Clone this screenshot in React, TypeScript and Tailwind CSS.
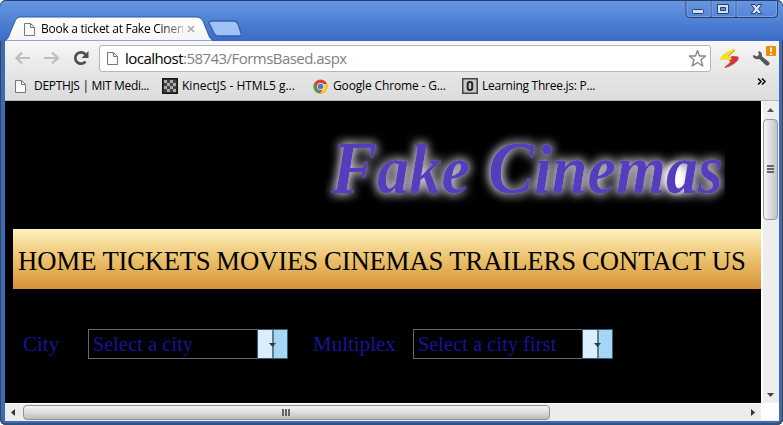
import React from "react";

const ui = "font-['Open_Sans','Noto_Sans',sans-serif]";
const serif = "font-['Liberation_Serif',serif]";

function PageIcon() {
  return (
    <svg width="13" height="15" viewBox="0 0 13 15" className="shrink-0">
      <path d="M1.500 1.500h6l4 4v8h-10z" fill="#fafafa" stroke="#777" />
      <path d="M7.500 1.500v4h4" fill="none" stroke="#777" />
    </svg>
  );
}

function TitleBar() {
  return (
    <header className="relative flex h-[41px] shrink-0 rounded-t-md bg-gradient-to-b from-[#6797e1] to-[#3b6bc6] shadow-[inset_0_1px_0_#26406d]">
      <svg width="250" height="41" viewBox="0 0 250 41" className="absolute left-0 top-0">
        <defs>
          <linearGradient id="tab" x1="0" y1="0" x2="0" y2="1">
            <stop offset="0" stopColor="#fff" />
            <stop offset="1" stopColor="#f5f5f5" />
          </linearGradient>
        </defs>
        <path d="M4 41C8 40 9 36 10 33L15 21Q16.500 17 20 17H197Q201 17 203 21L209 36Q211 41 216 41Z" fill="url(#tab)" stroke="#3058a5" strokeWidth="1" />
        <path d="M209 23Q209 21 212 21H234Q237 21 238 24L241 33Q242 36 239 36H219Q215 36 214 33Z" fill="#9dc2f3" stroke="#345fae" strokeWidth="1.300" />
      </svg>
      <div className="relative ml-[23px] mt-[17px] flex h-6 w-[174px] items-center">
        <PageIcon />
        <span className={`${ui} ml-[5px] w-[142px] whitespace-nowrap bg-gradient-to-r from-black from-80% to-[#bbb] bg-clip-text text-[12px] tracking-[-0.26px] text-transparent`}>Book a ticket at Fake Cinen</span>
        <svg width="9" height="9" viewBox="0 0 9 9" className="ml-[4px] shrink-0"><path d="M1 1l6 6M7 1L1 7" stroke="#aaa" strokeWidth="1.700" /></svg>
      </div>
      <svg width="94" height="19" viewBox="0 0 94 19" className="ml-auto mr-[4px] shrink-0">
        <path d="M1 1V14Q1 17.500 5 17.500H89Q92.500 17.500 92.500 14V1M26 1V17M51 1V17" fill="none" stroke="#263f6d" />
        <path d="M2 1V14Q2 16.500 5 16.500H25V1M27 1V16.500H50V1M52 1V16.500H88Q91.500 16.500 91.500 13V1" fill="none" stroke="#86afed" strokeWidth=".7" />
        <rect x="7.500" y="9.500" width="11" height="4" rx="1" fill="#d3e0f7" stroke="#29426e" />
        <path d="M32.500 4.500H43.500V13.500H32.500ZM35.500 7.500H40.500V10.500H35.500Z" fillRule="evenodd" fill="#d3e0f7" stroke="#29426e" />
        <path d="M66 4.500H70L71.500 6.500L73 4.500H77L73.500 9L77 13.500H73L71.500 11.500L70 13.500H66L69.500 9Z" fill="#d3e0f7" stroke="#29426e" />
      </svg>
    </header>
  );
}

function Toolbar() {
  return (
    <div className="flex h-[34px] shrink-0 items-center bg-gradient-to-b from-[#f7f7f7] to-[#e5e5e5]">
      <svg width="80" height="24" viewBox="0 0 80 24" className="ml-[9px] shrink-0">
        <path d="M16 12H3M8 6.500L2.500 12L8 17.500" fill="none" stroke="#bdbdbd" strokeWidth="2.200" />
        <path d="M30 12H43M38 6.500L44 12L38 17.500" fill="none" stroke="#bdbdbd" strokeWidth="2.200" />
        <path d="M71.500 8.500A5.700 5.700 0 1 0 71.500 15.500" fill="none" stroke="#4e4e4e" strokeWidth="2.700" />
        <path d="M74.500 5V12H67.500Z" fill="#4e4e4e" />
      </svg>
      <div className="ml-[5px] flex h-[27px] w-[612px] shrink-0 items-center rounded-[3px] border border-[#b6b6b6] bg-white pl-[6px] pr-[3px]">
        <PageIcon />
        <span className={`${ui} ml-[6px] whitespace-nowrap text-[15px] tracking-[-0.54px] text-[#808080]`}><span className="text-black">localhost</span>:58743/FormsBased.aspx</span>
        <svg width="19" height="19" viewBox="0 0 19 19" className="ml-auto"><path d="M9.500 1.500L11.500 7H17.600L13 10.800L14.800 17L9.500 13.500L4.200 17L6 10.800L1.400 7H7.500Z" fill="#fff" stroke="#888" strokeWidth="1.400" strokeLinejoin="round" /></svg>
      </div>
      <svg width="64" height="30" viewBox="0 0 64 30" className="ml-[5px] shrink-0">
        <path d="M8 24.500L14.500 19L12 16.500L16 13L22 13.500Q23.500 14.500 21.500 17Q18 21 8 24.500Z" fill="#df3036" />
        <path d="M9 24.500Q18 22 22 16.500" fill="none" stroke="#83272c" strokeWidth=".9" />
        <path d="M4 15.500Q7 9.500 17.500 6Q20 6 18 8.500L12 13.500L16 15.500L14 17.500Q10 16.500 5 17Q3 17 4 15.500Z" fill="#f4df27" />
        <path d="M18.500 7.500L12 13.500" fill="none" stroke="#a08a23" strokeWidth=".9" />
        <path d="M44 8.500Q46.500 10 46 13.500L53 19Q54.500 21 52 22.500Q50.500 23 49 21.500L43.500 16Q39.500 17 37.500 14.500Q36.500 13 37.500 12L41 13.500L43 11.500L42 8.500Z" fill="#555" />
        <rect x="50" y="3" width="10" height="10" rx="1" fill="#f08c00" />
        <path d="M55 4.500V9M55 10.200V12" stroke="#fff" strokeWidth="1.800" />
      </svg>
    </div>
  );
}

function ChromeIcon() {
  return (
    <svg width="15" height="15" viewBox="0 0 15 15">
      <circle cx="7.500" cy="7.500" r="7" fill="#dc4335" />
      <path d="M1.500 4L4 10L8 14.500Q3 14.500 1 10Q0 7 1.500 4" fill="#35a94c" />
      <path d="M7 14.500L11 8L9 5H14A7 7 0 0 1 7 14.500" fill="#f5cf2e" />
      <circle cx="7.500" cy="7.500" r="3.500" fill="#eee" />
      <circle cx="7.500" cy="7.500" r="2.700" fill="#397fd2" />
    </svg>
  );
}

function CheckerIcon() {
  const cells = Array.from({ length: 8 }, (_, i) => i);
  return (
    <svg width="16" height="16" viewBox="0 0 16 16">
      <rect x=".75" y=".75" width="14.500" height="14.500" fill="#444" stroke="#171717" strokeWidth="1.500" />
      {cells.map((i) => {
        const row = Math.floor(i / 2);
        return <rect key={i} x={2 + (i % 2) * 6 + (row % 2) * 3} y={2 + row * 3} width="3" height="3" fill="#aaa" />;
      })}
    </svg>
  );
}

function Bookmark({ icon, label, width, tracking }: { icon: React.ReactNode; label: string; width: string; tracking: string }) {
  return (
    <div className={`flex shrink-0 items-center ${width}`}>
      <span className="flex w-4 shrink-0">{icon}</span>
      <span className={`${ui} ml-[4px] whitespace-nowrap text-[12px] ${tracking} text-black`}>{label}</span>
    </div>
  );
}

function Bookmarks() {
  return (
    <div className="flex h-[26px] shrink-0 items-center border-b border-[#b9b9bd] bg-gradient-to-b from-[#e5e5e5] to-[#dcdcdc] pb-[3px] pl-[9px] pr-[13px]">
      <Bookmark icon={<PageIcon />} label="DEPTHJS | MIT Medi..." width="w-[148px]" tracking="tracking-[-0.32px]" />
      <Bookmark icon={<CheckerIcon />} label="KinectJS - HTML5 g..." width="w-[151px]" tracking="tracking-[0px]" />
      <Bookmark icon={<ChromeIcon />} label="Google Chrome - G..." width="w-[149px]" tracking="tracking-[-0.15px]" />
      <Bookmark
        icon={<svg width="16" height="16" viewBox="0 0 16 16"><rect x=".75" y=".75" width="14.500" height="14.500" fill="#c8c8c8" stroke="#444" strokeWidth="1.500" /><rect x="5.700" y="4" width="4.500" height="8" rx="2" fill="none" stroke="#262626" strokeWidth="2" /></svg>}
        label="Learning Three.js: P..."
        width="w-[145px]"
        tracking="tracking-[-0.26px]"
      />
      <svg width="9" height="7" viewBox="0 0 9 7" className="mb-[9px] ml-auto"><path d="M1 .5L4 3.500L1 6.500M5 .5L8 3.500L5 6.500" fill="none" stroke="#000" strokeWidth="1.500" /></svg>
    </div>
  );
}

function Select({ label }: { label: string }) {
  return (
    <div className="flex h-[30px] w-[200px] shrink-0 border border-[#686868]">
      <span className={`${serif} w-[168px] whitespace-nowrap pl-[4px] text-[20px] leading-[28px] tracking-[0.18px] text-[#15159b]`}>{label}</span>
      <div className="relative -my-px -mr-px flex flex-1 border border-[#315e77]">
        <span className="w-[14px] bg-[#dceefb]" />
        <span className="w-[2px] bg-[#697c8a]" />
        <span className="flex-1 bg-[#a5d6f5]" />
        <svg width="7" height="4" viewBox="0 0 7 4" className="absolute left-[11px] top-[13px]"><path d="M0 0H7L3.500 4Z" fill="#174257" /></svg>
      </div>
    </div>
  );
}

function Logo() {
  return (
    <svg width="400" height="92" viewBox="0 0 400 92" className="ml-[320px] block overflow-visible">
      <defs>
        <filter id="glow" filterUnits="userSpaceOnUse" x="0" y="0" width="400" height="92">
          <feGaussianBlur in="SourceAlpha" stdDeviation="5.500" result="b" />
          <feFlood floodColor="#f4f0ff" floodOpacity=".75" />
          <feComposite in2="b" operator="in" result="halo" />
          <feMerge><feMergeNode in="halo" /><feMergeNode in="halo" /><feMergeNode in="SourceGraphic" /></feMerge>
        </filter>
        <radialGradient id="spot"><stop offset=".3" stopColor="#fff" /><stop offset="1" stopColor="#fff" stopOpacity="0" /></radialGradient>
      </defs>
      <g filter="url(#glow)" fill="#543ebd" fontFamily="Liberation Serif, serif" fontWeight="bold" fontStyle="italic" fontSize="69">
        <ellipse cx="351" cy="57" rx="15" ry="19" fill="url(#spot)" />
        <text x="6" y="72" textLength="139" lengthAdjust="spacingAndGlyphs"><tspan fontSize="74">F</tspan>ake</text>
        <text x="163" y="72" textLength="235" lengthAdjust="spacingAndGlyphs"><tspan fontSize="74">C</tspan>inemas</text>
      </g>
    </svg>
  );
}

function WebPage() {
  return (
    <main className={`${serif} h-[302px] w-[756px] bg-black pt-[20px]`}>
      <Logo />
      <nav className="ml-2 mt-4 flex h-[60px] items-center gap-[6px] whitespace-nowrap bg-gradient-to-b from-[#fff2bd] via-[#ebc16c] to-[#d69236] pl-[5px] pt-[3px] text-[26.670px] text-black">
        <span>HOME</span>
        <span className="tracking-[-0.25px]">TICKETS</span>
        <span className="tracking-[-0.1px]">MOVIES</span>
        <span className="tracking-[-0.08px]">CINEMAS</span>
        <span className="tracking-[-0.1px]">TRAILERS</span>
        <span>CONTACT US</span>
      </nav>
      <form className="mt-[38px] flex items-center pl-[18px] text-[#15159b]">
        <label className="w-[65px] pt-[2px] text-[21px]">City</label>
        <Select label="Select a city" />
        <label className="ml-[25px] w-[100px] pt-[2px] text-[21px]">Multiplex</label>
        <Select label="Select a city first" />
      </form>
    </main>
  );
}

function VerticalScroll() {
  return (
    <aside className="flex h-[302px] w-[17px] flex-col items-center border-l-2 border-white bg-[#eee]">
      <svg width="7" height="4" viewBox="0 0 7 4" className="mb-[7px] mt-[7px]"><path d="M0 4H7L3.500 0Z" fill="#555" /></svg>
      <div className="flex h-[101px] w-[15px] flex-col items-center justify-center gap-px rounded-sm border border-[#969696] bg-gradient-to-r from-[#f5f5f5] to-[#c4c4c8] pb-[2px]">
        <i className="h-[2px] w-[7px] bg-[#666]" /><i className="h-[2px] w-[7px] bg-[#666]" /><i className="h-[2px] w-[7px] bg-[#666]" />
      </div>
      <svg width="7" height="4" viewBox="0 0 7 4" className="mb-[6px] mt-auto"><path d="M0 0H7L3.500 4Z" fill="#444" /></svg>
    </aside>
  );
}

function HorizontalScroll() {
  return (
    <div className="flex h-[17px] bg-white">
      <div className="flex w-[756px] items-center border-t border-white bg-[#ececec]">
        <svg width="4" height="7" viewBox="0 0 4 7" className="ml-[6px]"><path d="M4 0V7L0 3.500Z" fill="#333" /></svg>
        <div className="ml-[8px] flex h-[15px] w-[527px] items-center justify-center gap-px rounded-sm border border-[#929292] bg-gradient-to-b from-[#f4f4f4] via-[#dcdcdc] to-[#bcbcc0] pr-[2px]">
          <i className="h-[7px] w-[2px] bg-[#666]" /><i className="h-[7px] w-[2px] bg-[#666]" /><i className="h-[7px] w-[2px] bg-[#666]" />
        </div>
        <svg width="4" height="7" viewBox="0 0 4 7" className="ml-auto mr-[6px]"><path d="M0 0V7L4 3.500Z" fill="#333" /></svg>
      </div>
    </div>
  );
}

export default function App() {
  return (
    <div className="flex h-[425px] w-[783px] flex-col overflow-hidden rounded-md bg-[#3b6bbd] shadow-[inset_1px_0_0_#444,inset_-1px_0_0_#444,inset_0_-2px_0_#31517e]">
      <TitleBar />
      <div className="ml-[5px] mr-[4px] flex h-[380px] flex-col overflow-hidden bg-[#eee]">
        <Toolbar />
        <Bookmarks />
        <div className="flex shrink-0"><WebPage /><VerticalScroll /></div>
        <HorizontalScroll />
      </div>
    </div>
  );
}
